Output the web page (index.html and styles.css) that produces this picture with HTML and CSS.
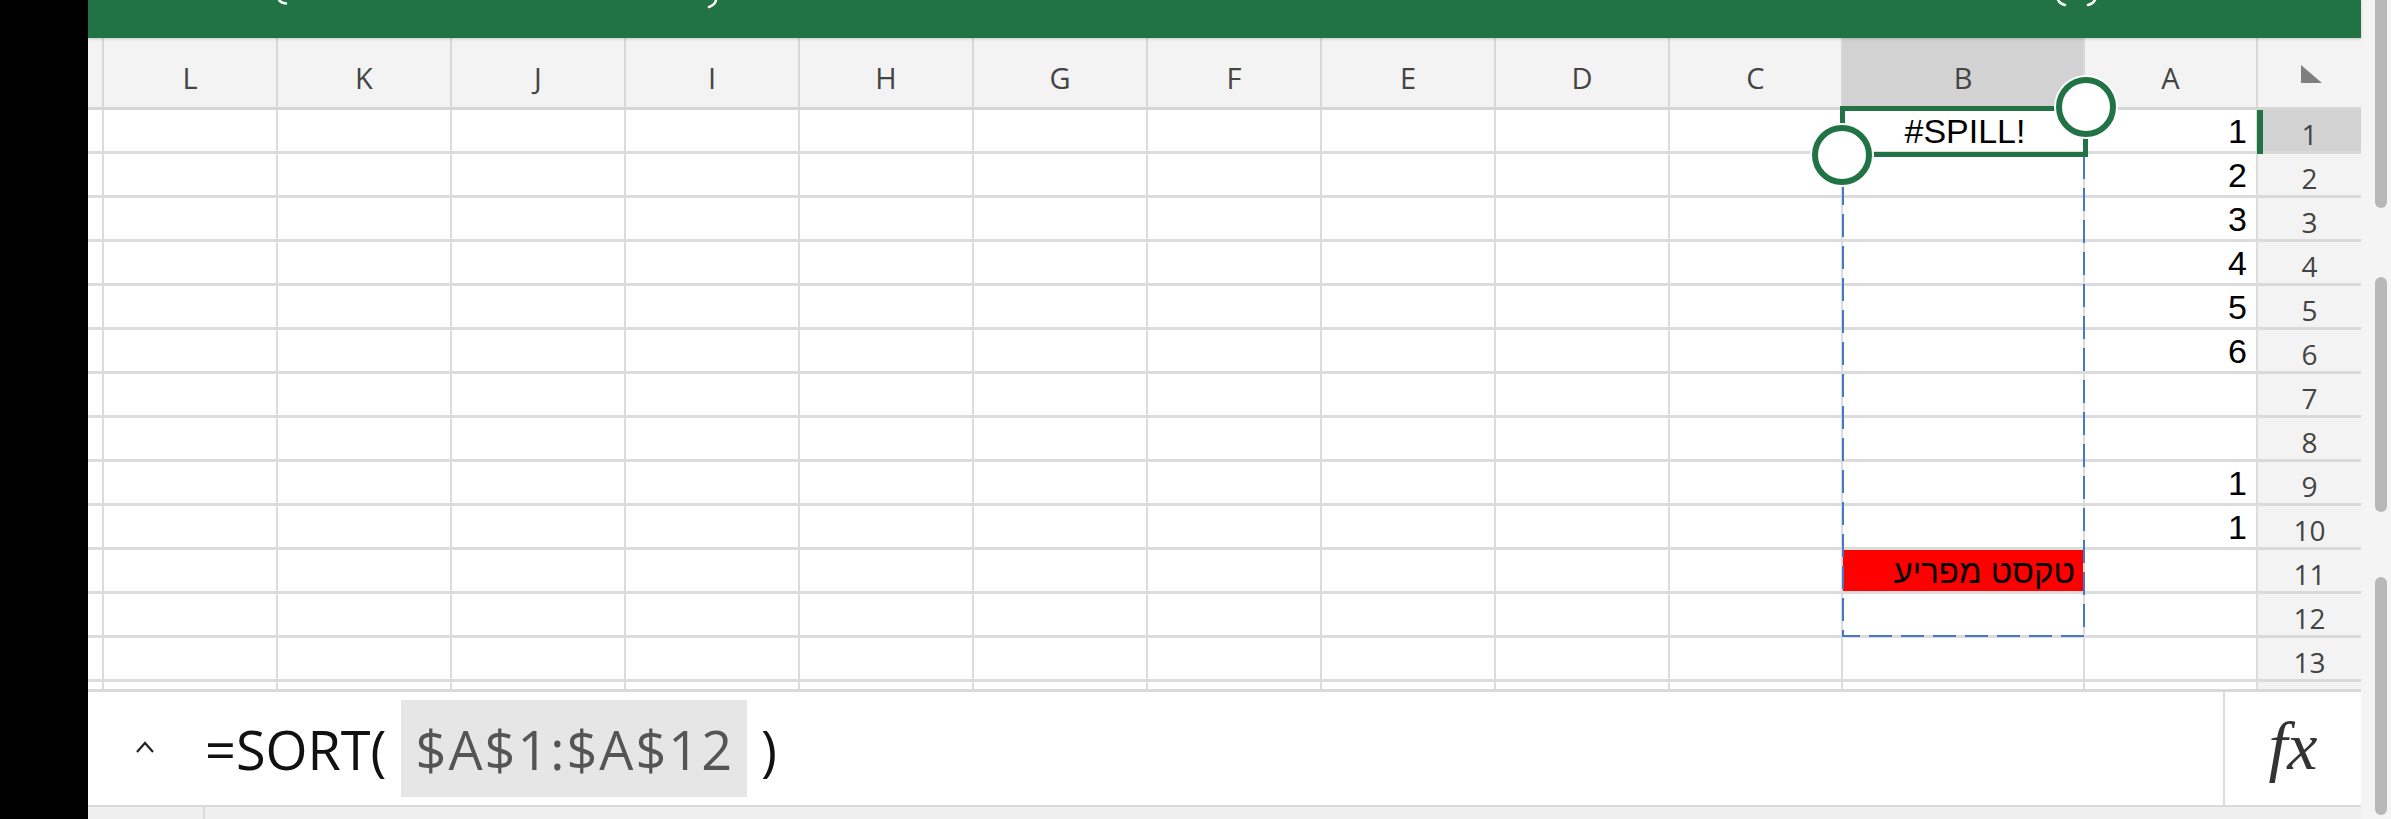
FILE: index.html
```html
<!DOCTYPE html>
<html lang="he">
<head>
<meta charset="utf-8">
<title>Excel</title>
<link rel="stylesheet" href="styles.css">
</head>
<body>
<div class="app">
  <div class="edge"></div>
  <div class="main">
    <div class="topbar">
      <svg class="topmarks" width="2273" height="38" viewBox="0 0 2273 38">
        <path d="M191 0 Q193 3 198 3.5" />
        <path d="M628 0 Q627 5 621 7" />
        <path d="M1970 0 Q1972 4 1977 5" />
        <path d="M2007 0 Q2005 4 2000 5" />
      </svg>
    </div>
    <div class="sheet">
      <div class="grid">
        <div class="hd"></div><div class="hd">L</div><div class="hd">K</div><div class="hd">J</div><div class="hd">I</div><div class="hd">H</div><div class="hd">G</div><div class="hd">F</div><div class="hd">E</div><div class="hd">D</div><div class="hd">C</div><div class="hd hd-sel">B</div><div class="hd">A</div><div class="hd corner"><span class="tri"></span></div>

        <div class="c"></div><div class="c"></div><div class="c"></div><div class="c"></div><div class="c"></div><div class="c"></div><div class="c"></div><div class="c"></div><div class="c"></div><div class="c"></div><div class="c"></div><div class="c c-spill">#SPILL!</div><div class="c num">1</div><div class="rh rh-sel">1</div>

        <div class="c"></div><div class="c"></div><div class="c"></div><div class="c"></div><div class="c"></div><div class="c"></div><div class="c"></div><div class="c"></div><div class="c"></div><div class="c"></div><div class="c"></div><div class="c"></div><div class="c num">2</div><div class="rh">2</div>

        <div class="c"></div><div class="c"></div><div class="c"></div><div class="c"></div><div class="c"></div><div class="c"></div><div class="c"></div><div class="c"></div><div class="c"></div><div class="c"></div><div class="c"></div><div class="c"></div><div class="c num">3</div><div class="rh">3</div>

        <div class="c"></div><div class="c"></div><div class="c"></div><div class="c"></div><div class="c"></div><div class="c"></div><div class="c"></div><div class="c"></div><div class="c"></div><div class="c"></div><div class="c"></div><div class="c"></div><div class="c num">4</div><div class="rh">4</div>

        <div class="c"></div><div class="c"></div><div class="c"></div><div class="c"></div><div class="c"></div><div class="c"></div><div class="c"></div><div class="c"></div><div class="c"></div><div class="c"></div><div class="c"></div><div class="c"></div><div class="c num">5</div><div class="rh">5</div>

        <div class="c"></div><div class="c"></div><div class="c"></div><div class="c"></div><div class="c"></div><div class="c"></div><div class="c"></div><div class="c"></div><div class="c"></div><div class="c"></div><div class="c"></div><div class="c"></div><div class="c num">6</div><div class="rh">6</div>

        <div class="c"></div><div class="c"></div><div class="c"></div><div class="c"></div><div class="c"></div><div class="c"></div><div class="c"></div><div class="c"></div><div class="c"></div><div class="c"></div><div class="c"></div><div class="c"></div><div class="c num"></div><div class="rh">7</div>

        <div class="c"></div><div class="c"></div><div class="c"></div><div class="c"></div><div class="c"></div><div class="c"></div><div class="c"></div><div class="c"></div><div class="c"></div><div class="c"></div><div class="c"></div><div class="c"></div><div class="c num"></div><div class="rh">8</div>

        <div class="c"></div><div class="c"></div><div class="c"></div><div class="c"></div><div class="c"></div><div class="c"></div><div class="c"></div><div class="c"></div><div class="c"></div><div class="c"></div><div class="c"></div><div class="c"></div><div class="c num">1</div><div class="rh">9</div>

        <div class="c"></div><div class="c"></div><div class="c"></div><div class="c"></div><div class="c"></div><div class="c"></div><div class="c"></div><div class="c"></div><div class="c"></div><div class="c"></div><div class="c"></div><div class="c"></div><div class="c num">1</div><div class="rh">10</div>

        <div class="c"></div><div class="c"></div><div class="c"></div><div class="c"></div><div class="c"></div><div class="c"></div><div class="c"></div><div class="c"></div><div class="c"></div><div class="c"></div><div class="c"></div><div class="c c-red" dir="rtl">טקסט מפריע</div><div class="c num"></div><div class="rh">11</div>

        <div class="c"></div><div class="c"></div><div class="c"></div><div class="c"></div><div class="c"></div><div class="c"></div><div class="c"></div><div class="c"></div><div class="c"></div><div class="c"></div><div class="c"></div><div class="c"></div><div class="c num"></div><div class="rh">12</div>

        <div class="c"></div><div class="c"></div><div class="c"></div><div class="c"></div><div class="c"></div><div class="c"></div><div class="c"></div><div class="c"></div><div class="c"></div><div class="c"></div><div class="c"></div><div class="c"></div><div class="c num"></div><div class="rh">13</div>

        <div class="s"></div><div class="s"></div><div class="s"></div><div class="s"></div><div class="s"></div><div class="s"></div><div class="s"></div><div class="s"></div><div class="s"></div><div class="s"></div><div class="s"></div><div class="s"></div><div class="s"></div><div class="s rh-s"></div>
      </div>

      <svg class="spill" width="244" height="530" viewBox="0 0 244 530">
        <rect x="1" y="1" width="241" height="527" />
      </svg>
      <div class="row-mark"></div>
      <div class="selection"></div>
      <div class="handle handle-tr"></div>
      <div class="handle handle-bl"></div>
    </div>
    <div class="formula">
      <div class="fbox">
        <svg class="caret" width="20" height="14" viewBox="0 0 20 14"><polyline points="2,12 10,3 18,12" /></svg>
        <span class="ftext">=SORT(</span>
        <span class="fref">$A$1:$A$12</span>
        <span class="ftext">)</span>
      </div>
      <div class="fx">fx</div>
    </div>
    <div class="status"><div class="status-cell"></div></div>
  </div>
  <div class="scroll">
    <div class="thumb thumb-1"></div>
    <div class="thumb thumb-2"></div>
    <div class="thumb thumb-3"></div>
  </div>
</div>
</body>
</html>
```

FILE: styles.css
```css
html, body {
  margin: 0;
  padding: 0;
  width: 2391px;
  height: 819px;
  overflow: hidden;
  background: #000;
}

.app {
  display: flex;
  width: 2391px;
  height: 819px;
}

.edge {
  width: 88px;
  flex: none;
  background: #000;
}

.main {
  width: 2273px;
  flex: none;
  display: flex;
  flex-direction: column;
  background: #fff;
}

.topbar {
  height: 38px;
  flex: none;
  background: #217346;
  position: relative;
  z-index: 2;
  box-shadow: 0 1px 3px rgba(0, 0, 0, 0.18);
}

.topmarks {
  display: block;
}

.topmarks path {
  fill: none;
  stroke: #ffffff;
  stroke-width: 2.5;
  stroke-linecap: round;
}

.sheet {
  position: relative;
  flex: none;
}

.grid {
  display: grid;
  grid-template-columns: 16px repeat(9, 174px) 173px 242px 173px 103px;
  grid-template-rows: 72px repeat(13, 44px) 7px;
}

.hd {
  box-sizing: border-box;
  background: #f3f3f3;
  border-right: 2px solid #d7d7d7;
  border-bottom: 3px solid #d5d5d5;
  display: flex;
  align-items: center;
  justify-content: center;
  padding-top: 9px;
  font-family: "Open Sans", "Noto Sans", sans-serif;
  font-size: 29px;
  color: #444;
}

.hd-sel {
  background: #d2d2d2;
}

.corner {
  border-right: none;
}

.tri {
  display: block;
  width: 0;
  height: 0;
  margin-top: -6px;
  margin-left: 4px;
  border-left: 21px solid #7f7f7f;
  border-top: 18px solid transparent;
}

.c {
  box-sizing: border-box;
  background: #fff;
  border-right: 2px solid #dcdcdc;
  border-bottom: 3px solid #dcdcdc;
  display: flex;
  align-items: flex-end;
  font-family: "Liberation Sans", Arial, sans-serif;
  font-size: 34px;
  line-height: 39px;
  color: #000;
  overflow: hidden;
  white-space: nowrap;
}

.num {
  justify-content: flex-end;
  padding-right: 9px;
}

.c-spill {
  justify-content: center;
  padding-left: 4px;
}

.c-red {
  background: #ff0000;
  justify-content: flex-start;
  padding-right: 8px;
  font-family: "Liberation Sans", "DejaVu Sans", sans-serif;
  font-size: 33px;
}

.rh {
  box-sizing: border-box;
  background: #f3f3f3;
  border-bottom: 3px solid #dadada;
  display: flex;
  align-items: center;
  justify-content: center;
  padding-top: 6px;
  font-family: "Open Sans", "Noto Sans", sans-serif;
  font-size: 28px;
  color: #444;
}

.rh-sel {
  background: #d2d2d2;
}

.s {
  box-sizing: border-box;
  background: #fff;
  border-right: 2px solid #dcdcdc;
}

.rh-s {
  background: #f3f3f3;
  border-right: none;
}

.spill {
  position: absolute;
  left: 1754px;
  top: 70px;
  z-index: 3;
}

.spill rect {
  fill: none;
  stroke: #4a76c8;
  stroke-width: 2;
  stroke-dasharray: 23 9;
}

.row-mark {
  position: absolute;
  left: 2169px;
  top: 72px;
  width: 6px;
  height: 44px;
  background: #217346;
  z-index: 3;
}

.selection {
  position: absolute;
  left: 1752px;
  top: 68px;
  width: 248px;
  height: 51px;
  box-sizing: border-box;
  border: 5px solid #217346;
  z-index: 4;
}

.handle {
  position: absolute;
  width: 60px;
  height: 60px;
  box-sizing: border-box;
  border-radius: 50%;
  border: 6px solid #217346;
  background: #fff;
  box-shadow: 0 0 0 2px #fff;
  z-index: 5;
}

.handle-tr {
  left: 1968px;
  top: 39px;
}

.handle-bl {
  left: 1724px;
  top: 87px;
}

.formula {
  height: 116px;
  flex: none;
  box-sizing: border-box;
  border-top: 3px solid #d9d9d9;
  display: flex;
  background: #fff;
}

.fbox {
  flex: 1;
  display: flex;
  align-items: center;
  padding-left: 47px;
  font-family: "Open Sans", "Noto Sans", sans-serif;
  font-size: 54px;
  color: #111;
}

.caret {
  display: block;
  margin-right: 50px;
  margin-top: -4px;
}

.caret polyline {
  fill: none;
  stroke: #222;
  stroke-width: 2.2;
  stroke-linejoin: miter;
}

.ftext {
  line-height: 1;
}

.fref {
  background: #e6e6e6;
  color: #555;
  height: 97px;
  display: flex;
  align-items: center;
  padding: 0 13px 0 15px;
  margin: 0 14px 0 14px;
  line-height: 1;
  letter-spacing: 2px;
}

.fx {
  width: 138px;
  flex: none;
  box-sizing: border-box;
  border-left: 2px solid #dcdcdc;
  display: flex;
  align-items: center;
  justify-content: center;
  font-family: "Liberation Serif", "DejaVu Serif", serif;
  font-style: italic;
  font-size: 68px;
  color: #333;
  padding-bottom: 4px;
}

.status {
  height: 14px;
  flex: none;
  box-sizing: border-box;
  border-top: 2px solid #dadada;
  background: #efefef;
  display: flex;
}

.status-cell {
  width: 115px;
  border-right: 2px solid #dadada;
}

.scroll {
  width: 30px;
  flex: none;
  background: #f4f4f4;
  display: flex;
  flex-direction: column;
}

.thumb {
  width: 12px;
  margin-left: 14px;
  background: #b8b8b8;
  border-radius: 6px;
  flex: none;
}

.thumb-1 {
  height: 208px;
  border-top-left-radius: 0;
  border-top-right-radius: 0;
}

.thumb-2 {
  height: 235px;
  margin-top: 69px;
}

.thumb-3 {
  height: 238px;
  margin-top: 65px;
}
```
